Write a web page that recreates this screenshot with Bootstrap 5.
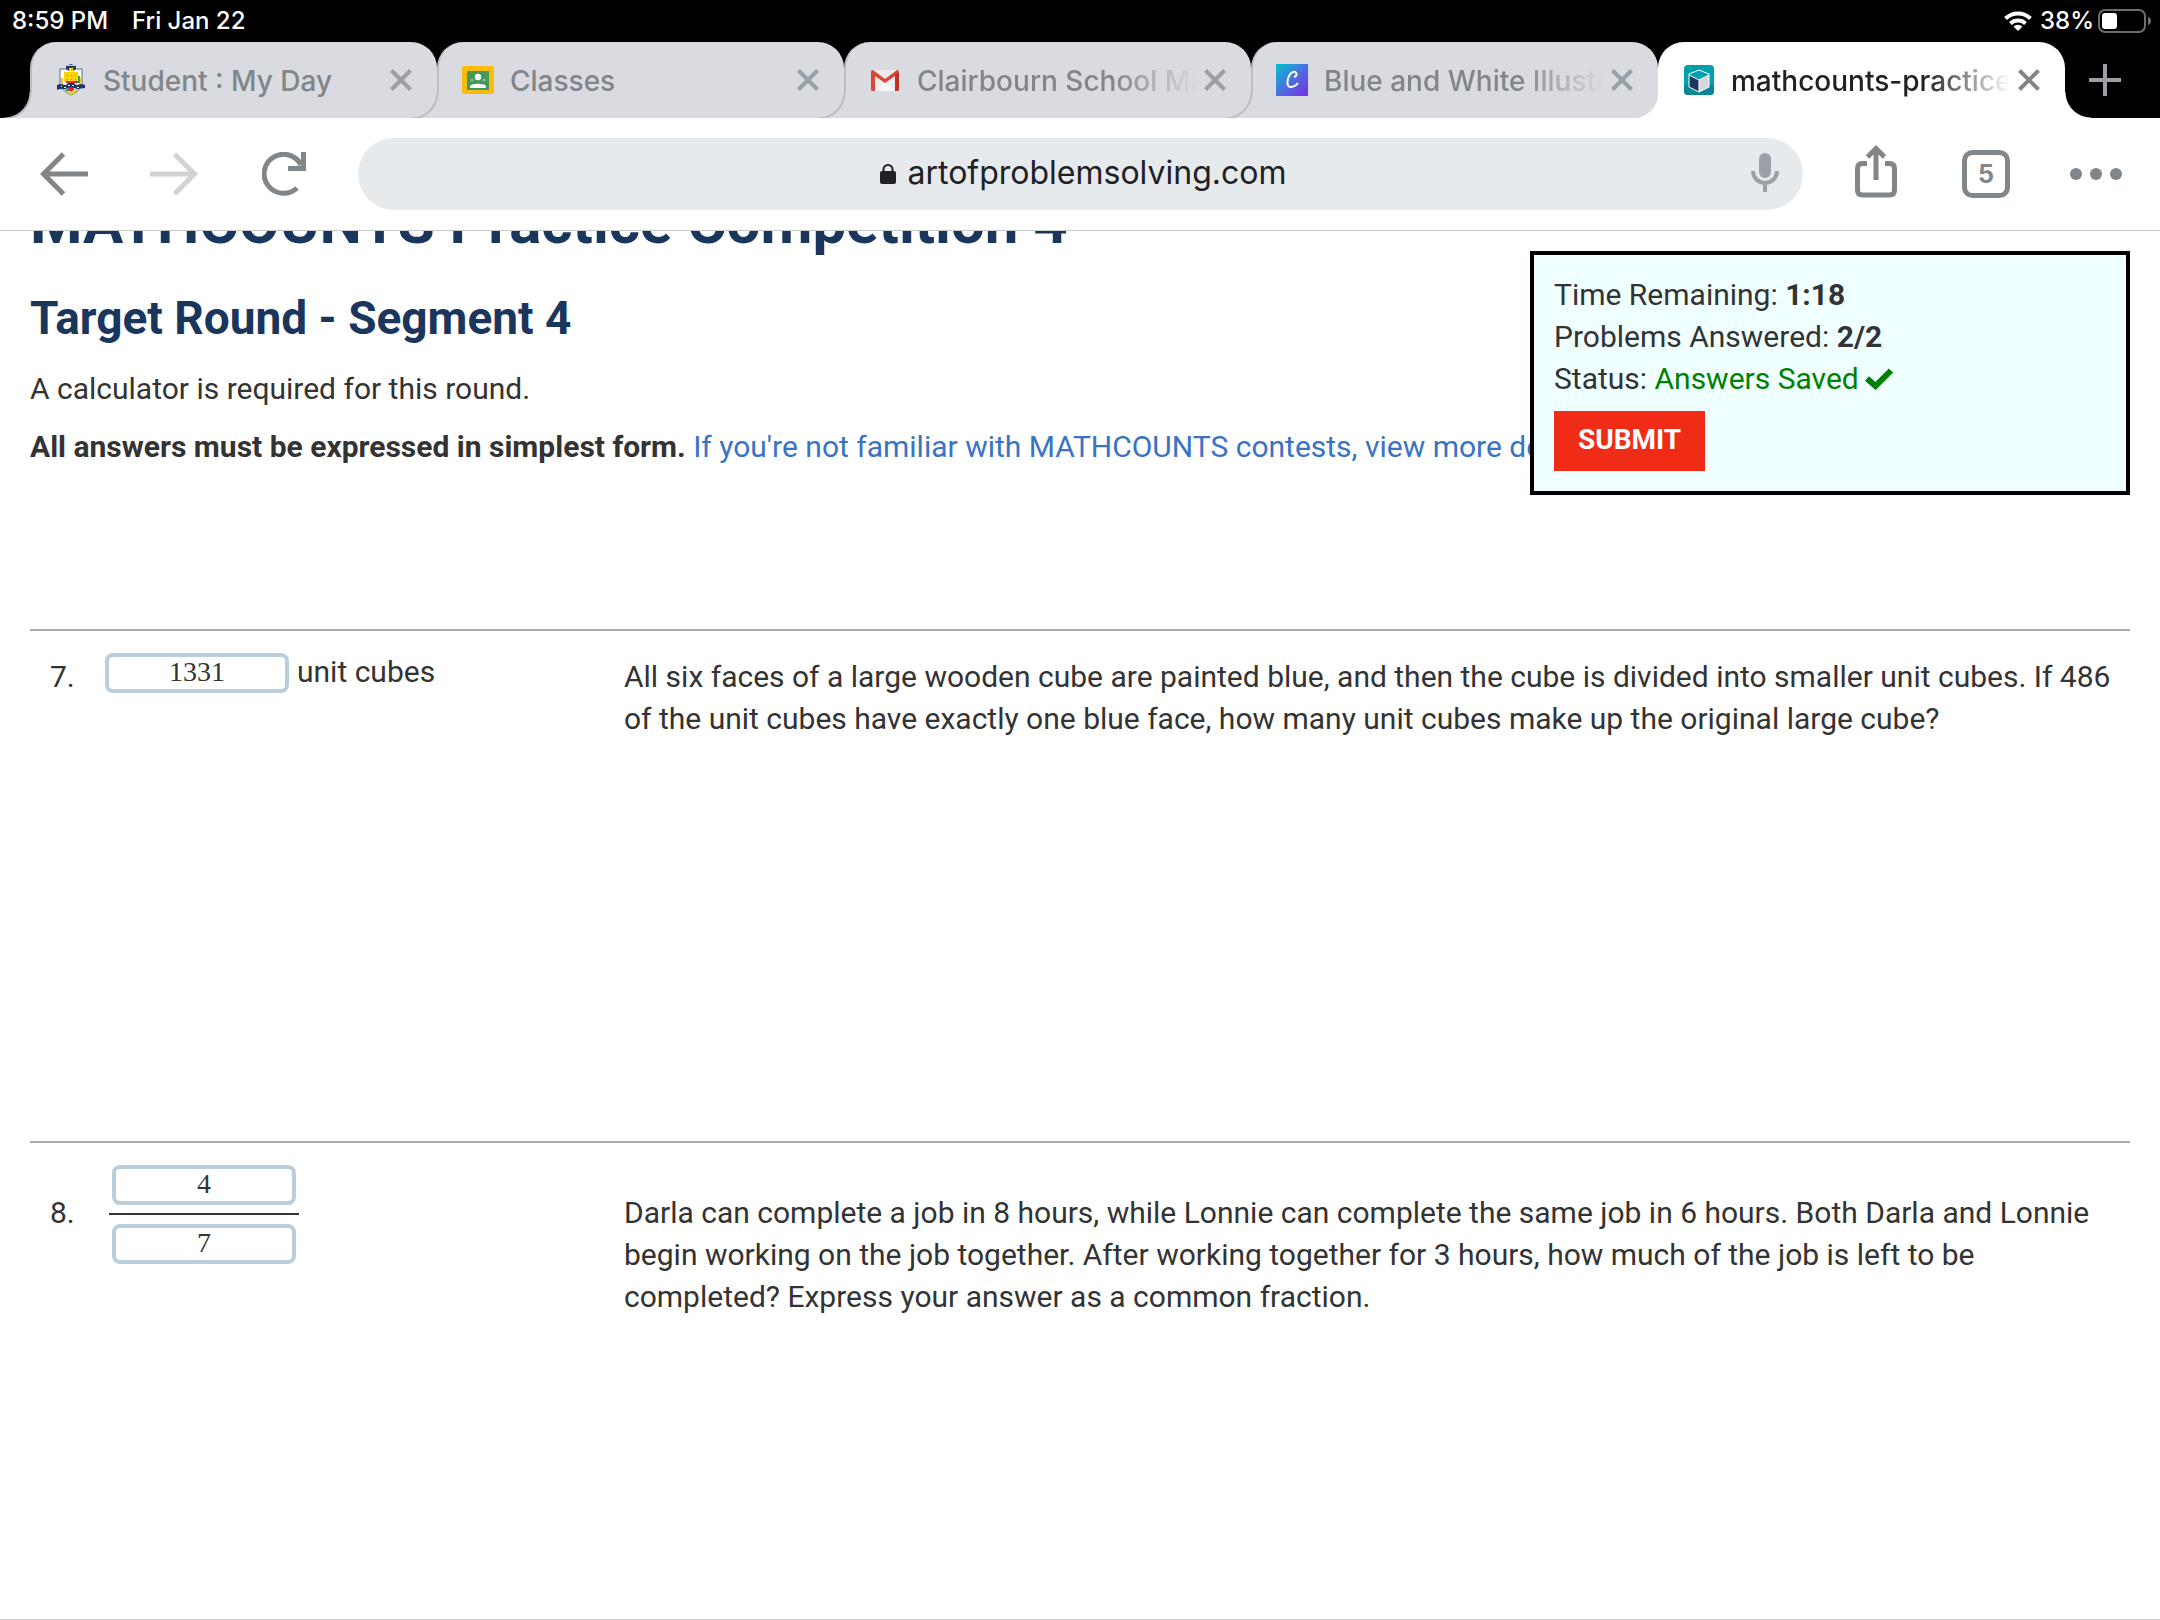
<!DOCTYPE html>
<html lang="en">
<head>
<meta charset="utf-8">
<meta name="viewport" content="width=device-width, initial-scale=1">
<title>MATHCOUNTS Practice Competition 4</title>
<link href="https://cdn.jsdelivr.net/npm/bootstrap@5.3.0/dist/css/bootstrap.min.css" rel="stylesheet">
<style>
  :root { --chrome-grey: #80868a; --tab-bg: #dadbe0; --tab-line: #bcbdc2; --navy: #1b365d; }
  body { font-family: Roboto, sans-serif; font-size: 30px; line-height: 42px; color: #333; }
  svg { display: block; }

  .status-bar { height: 42px; padding: 0 9px 0 12px; font: 500 24px/40px Inter, sans-serif; }
  .tab-strip { height: 76px; padding-left: 30px; font-family: Inter, sans-serif; }
  .browser-tab { position: relative; flex: 1 1 0; min-width: 0; padding: 0 25px 0 23px; background: var(--tab-bg); border-left: 2px solid var(--tab-line); border-radius: 26px 26px 0 0; color: var(--chrome-grey); }
  .browser-tab::before { content: ""; position: absolute; left: -28px; bottom: 0; width: 28px; height: 26px; background: radial-gradient(circle at 0 0, transparent 25px, var(--tab-line) 26px, var(--tab-line) 27px, var(--tab-bg) 28px); }
  .browser-tab.current { background: #fff; border-color: #fff; color: #202124; }
  .browser-tab.current::before { background: radial-gradient(circle at 0 0, transparent 26px, #fff 27px); }
  .browser-tab.current::after { content: ""; position: absolute; right: -26px; bottom: 0; width: 26px; height: 26px; background: radial-gradient(circle at 100% 0, transparent 25px, #fff 26px); }
  .favicon { width: 32px; }
  .tab-label { flex: 1 1 0; min-width: 0; padding-top: 2px; overflow: hidden; white-space: nowrap; font-size: 28px; font-weight: 500; line-height: 40px; color: inherit; text-decoration: none; }
  .fading { -webkit-mask-image: linear-gradient(90deg, #000 70%, transparent); mask-image: linear-gradient(90deg, #000 70%, transparent); }
  .browser-tab .tab-close, .tab-strip .new-tab { color: #9aa0a8; }
  .browser-tab.current .tab-close { color: var(--chrome-grey); }
  .new-tab { width: 95px; padding-right: 15px; }

  .toolbar { height: 112px; padding: 0 9px; }
  .toolbar .tool { width: 110px; height: 80px; color: var(--chrome-grey); }
  .address { height: 72px; margin: 0 18px 0 19px; padding-left: 8px; background: #e6eaed; border-radius: 36px; color: #202124; }
  .address input { width: 382px; margin-left: 12px; padding: 0 0 2px; font: 400 32px/40px Inter, sans-serif; color: inherit; outline: 0; }
  .address .mic { right: 24px; top: 15px; color: #9aa0a8; }

  .page { padding: 0 30px; border-top: 1px solid #c8c9ca; border-bottom: 1px solid #c8c9ca; }
  .contest-title { margin: -44px 0 32px; font-size: 60px; line-height: 72px; font-weight: 700; color: var(--navy); }
  .round-title { margin: 0 0 23px; font-size: 46px; line-height: 54px; font-weight: 700; color: var(--navy); }
  .notes { height: 261px; }
  .notes p { margin: 0 0 16px; }
  .notes a { color: #3a72c4; text-decoration: none; }
  .timer { right: 30px; top: 20px; width: 600px; padding: 19px 20px 20px; border: 4px solid #000; background: #f0ffff; }
  .saved { gap: 6px; color: #008000; }
  .timer .submit { height: 60px; margin-top: 11px; padding: 0 24px 2px; background: #f02b16; color: #fff; font-size: 28px; font-weight: 700; line-height: 58px; }

  .problem { border-top: 2px solid #a9a9a9; padding: 22px 0 0 20px; min-height: 512px; }
  .number { width: 55px; }
  .reply { width: 519px; line-height: 38px; }
  .number, .question { padding-top: 3px; }
  .with-fraction .number, .with-fraction .question { padding-top: 27px; }
  .answer { width: 184px; height: 40px; padding: 0 0 2px; border: 4px solid #b9cddd; border-radius: 8px; font: 28px/30px "Liberation Serif", serif; text-align: center; color: #333; }
  .fraction { width: 190px; margin-left: 4px; }
  .fraction-bar { height: 2px; margin: 8px 0 9px; background: #333; }
</style>
<script src="https://cdn.jsdelivr.net/npm/bootstrap@5.3.0/dist/js/bootstrap.bundle.min.js"></script>
</head>
<body class="vh-100 d-flex flex-column overflow-hidden bg-white">
<header>
  <div class="bg-black">
    <div class="status-bar d-flex align-items-center text-white">
      <span>8:59 PM</span><span class="ms-4">Fri Jan 22</span>
      <svg class="ms-auto" width="28" height="20" viewBox="0 0 28 20" fill="none" stroke="#fff" stroke-width="4"><path d="M1.500 7.500a18 18 0 0 1 25 0M6.500 12.500a11 11 0 0 1 15 0"/><path d="M14 20l-4.500-4.500a6.500 6.500 0 0 1 9 0z" fill="#fff" stroke="none"/></svg>
      <span class="ms-2">38%</span>
      <svg class="ms-1" width="53" height="24" viewBox="0 0 53 24"><rect x="1" y="1" width="46" height="22" rx="6" fill="none" stroke="#6d6d6d" stroke-width="2"/><rect x="4" y="4" width="15" height="16" rx="3" fill="#fff"/><path d="M50 8c4 1 4 7 0 8z" fill="#6d6d6d"/></svg>
    </div>
    <nav class="tab-strip d-flex" aria-label="Tabs">
      <div class="browser-tab d-flex align-items-center">
        <svg class="favicon" height="32" viewBox="-2 0 32 32"><path d="M3 5h22v15q-2 7-11 11Q5 27 3 20z" fill="#fff" stroke="#5b6b88"/><path d="M5 14v7q3 6 9 9 6-3 9-9v-7" fill="none" stroke="#e6c928" stroke-width="2"/><path d="M7 8h14v10H7z" fill="#fdd303"/><path d="M10 11h1v1h-1zm4 0h1v1h-1zm4 0h1v1h-1zm-8 4h1v1h-1zm4 0h1v1h-1zm4 0h1v1h-1z" fill="#a58a1a"/><path d="M9 2l5-2 5 2v3l-3 2h-4L9 5z" fill="#1f3768"/><path d="M10 1h8v1h-8zM12 4h4v3h-4z" fill="#fdd303"/><path d="M15 3h2v1h-2z" fill="#d8263c"/><path d="M9 17h12v2H9zm2 6h6v3l-3 2-3-2z" fill="#d8263c"/><path d="M21 12h2v7h-2zM9 25h3v2H9z" fill="#3f9a57"/><path d="M0 21l3-1 6 1 2-2h6l2 2 6-1 3 1v3l-8 1-3-1-3-1-5 2-6 0-3 1z" fill="#1f3768"/><path d="M4 22h1v1H4zm3 1h2v1H7zm4-2h2v1h-2zm4 0h2v1h-2zm5 2h2v1h-2z" fill="#fff"/></svg>
        <a class="tab-label ms-3" href="#">Student : My Day</a>
        <button class="tab-close btn p-0 border-0 ms-2" aria-label="Close tab"><svg width="22" height="22" viewBox="0 0 22 22" stroke="currentColor" stroke-width="4"><path d="M1.500 1.500l19 19m0-19l-19 19"/></svg></button>
      </div>
      <div class="browser-tab d-flex align-items-center">
        <svg class="favicon" height="28" viewBox="0 0 32 28"><rect width="32" height="28" rx="2" fill="#fbbc0c"/><path d="M5 5h22v19H5z" fill="#45975a"/><circle cx="16" cy="11" r="3.200" fill="#fff"/><path d="M8 22v-2c2-3 14-3 16 0v2z" fill="#fff"/><circle cx="10" cy="14" r="1.500" fill="#87bd94"/><circle cx="22" cy="14" r="1.500" fill="#87bd94"/></svg>
        <a class="tab-label ms-3" href="#">Classes</a>
        <button class="tab-close btn p-0 border-0 ms-2" aria-label="Close tab"><svg width="22" height="22" viewBox="0 0 22 22" stroke="currentColor" stroke-width="4"><path d="M1.500 1.500l19 19m0-19l-19 19"/></svg></button>
      </div>
      <div class="browser-tab d-flex align-items-center">
        <svg class="favicon" height="21" viewBox="-2 0 32 21"><path d="M1 0h26v21H1z" fill="#ececec"/><path d="M4 21l10-9 10 9z" fill="#f8f8f8"/><path d="M0 2q0-2 2-2l12 9 12-9q2 0 2 2l-4 4-10 7L4 6v15H1l-1-1z" fill="#dc4538"/><path d="M28 2v18l-1 1h-3V5z" fill="#be3125"/></svg>
        <a class="tab-label fading ms-3" href="#">Clairbourn School Mail</a>
        <button class="tab-close btn p-0 border-0 ms-2" aria-label="Close tab"><svg width="22" height="22" viewBox="0 0 22 22" stroke="currentColor" stroke-width="4"><path d="M1.500 1.500l19 19m0-19l-19 19"/></svg></button>
      </div>
      <div class="browser-tab d-flex align-items-center">
        <svg class="favicon" height="32" viewBox="0 0 32 32"><defs><linearGradient id="canva" x2="1" y2="1"><stop stop-color="#00c4cc"/><stop offset=".5" stop-color="#4a70df"/><stop offset="1" stop-color="#7d2ae7"/></linearGradient></defs><path d="M0 0h32v32H0z" fill="url(#canva)"/><path d="M18 13c4-1 3-6-1-5-5 2-8 14-3 15 4 0 6-1 8-4" fill="none" stroke="#fff" stroke-width="2"/></svg>
        <a class="tab-label fading ms-3" href="#">Blue and White Illustration</a>
        <button class="tab-close btn p-0 border-0 ms-2" aria-label="Close tab"><svg width="22" height="22" viewBox="0 0 22 22" stroke="currentColor" stroke-width="4"><path d="M1.500 1.500l19 19m0-19l-19 19"/></svg></button>
      </div>
      <div class="browser-tab current d-flex align-items-center">
        <svg class="favicon" height="30" viewBox="-1 0 32 30"><rect width="30" height="30" rx="4" fill="#009fae"/><path d="M0 21q4-3 8 0h14q4-3 8 0v5q0 4-4 4H4q-4 0-4-4z" fill="#078694"/><path d="M5 10l10 5v12L5 22z" fill="#1b365d"/><path d="M25 10l-10 5v12l10-5z" fill="#d4d6da"/><path d="M15 5l10 4v13l-10 5-10-5V9zM5 10l10 5 10-5M15 15v12" fill="none" stroke="#fff"/></svg>
        <a class="tab-label fading ms-3" href="#" aria-current="page">mathcounts-practice</a>
        <button class="tab-close btn p-0 border-0 ms-2" aria-label="Close tab"><svg width="22" height="22" viewBox="0 0 22 22" stroke="currentColor" stroke-width="4"><path d="M1.500 1.500l19 19m0-19l-19 19"/></svg></button>
      </div>
      <button class="new-tab btn border-0 rounded-0 py-0 ps-0 d-flex align-items-center justify-content-center" aria-label="New tab"><svg width="32" height="32" viewBox="0 0 32 32" stroke="currentColor" stroke-width="4"><path d="M0 16h32M16 0v32"/></svg></button>
    </nav>
  </div>
  <div class="toolbar d-flex align-items-center bg-white">
    <button class="tool btn border-0 p-0 d-flex align-items-center justify-content-center" aria-label="Back"><svg width="48" height="44" viewBox="0 0 48 44" fill="none" stroke="currentColor" stroke-width="5"><path d="M48 22H4M23.500 2l-20 20 20 20"/></svg></button>
    <button class="tool btn border-0 p-0 d-flex align-items-center justify-content-center" aria-label="Forward"><svg width="48" height="44" viewBox="0 0 48 44" fill="none" stroke="#d3d3d4" stroke-width="5"><path d="M0 22h44M24.500 2l20 20-20 20"/></svg></button>
    <button class="tool btn border-0 p-0 d-flex align-items-center justify-content-center" aria-label="Reload"><svg width="44" height="44" viewBox="0 0 44 44" fill="none" stroke="currentColor" stroke-width="5"><path d="M35 36A19.500 19.500 0 1 1 39 13M41.500 0v16.500H26"/></svg></button>
    <form class="address position-relative flex-grow-1 d-flex align-items-center justify-content-center" onsubmit="return false">
      <svg width="16" height="20" viewBox="0 0 16 20"><rect y="7" width="16" height="13" rx="2" fill="currentColor"/><path d="M3.500 9V5.500a4.500 4.500 0 0 1 9 0V9" fill="none" stroke="currentColor" stroke-width="2"/></svg>
      <input class="border-0 bg-transparent" type="text" aria-label="Address" value="artofproblemsolving.com">
      <button class="mic btn border-0 p-0 position-absolute" type="button" aria-label="Voice search"><svg width="28" height="40" viewBox="0 0 28 40"><rect x="8" width="12" height="25" rx="6" fill="currentColor"/><path d="M2 18a12 12 0 0 0 24 0M14 30v9" fill="none" stroke="currentColor" stroke-width="4"/></svg></button>
    </form>
    <button class="tool btn border-0 p-0 d-flex align-items-center justify-content-center" aria-label="Share"><svg width="42" height="60" viewBox="0 0 42 60" fill="none" stroke="currentColor" stroke-width="5"><path d="M12 19.500H7.500q-5 0-5 5V46q0 5 5 5h27q5 0 5-5V24.500q0-5-5-5H30M21 36V4M12.500 13L21 4.500l8.500 8.500"/></svg></button>
    <button class="tool btn border-0 p-0 d-flex align-items-center justify-content-center" aria-label="5 open tabs"><svg width="48" height="48" viewBox="0 0 48 48"><rect x="2.500" y="2.500" width="43" height="43" rx="8" fill="none" stroke="currentColor" stroke-width="5"/><text x="24" y="33" text-anchor="middle" font-family="Inter, sans-serif" font-size="25" font-weight="700" fill="currentColor">5</text></svg></button>
    <button class="tool btn border-0 p-0 d-flex align-items-center justify-content-center" aria-label="More"><svg width="52" height="12" viewBox="0 0 52 12" fill="currentColor"><circle cx="6" cy="6" r="6"/><circle cx="26" cy="6" r="6"/><circle cx="46" cy="6" r="6"/></svg></button>
  </div>
</header>
<main class="page position-relative flex-grow-1 overflow-hidden">
  <h1 class="contest-title">MATHCOUNTS Practice Competition 4</h1>
  <h2 class="round-title">Target Round - Segment 4</h2>
  <div class="notes text-nowrap">
    <p>A calculator is required for this round.</p>
    <p><strong>All answers must be expressed in simplest form.</strong> <a href="#">If you're not familiar with MATHCOUNTS contests, view more details.</a></p>
  </div>
  <aside class="timer position-absolute">
    <div>Time Remaining: <strong>1:18</strong></div>
    <div>Problems Answered: <strong>2/2</strong></div>
    <div class="d-flex align-items-center">Status:&nbsp;<span class="saved d-flex align-items-center">Answers Saved<svg width="28" height="22" viewBox="0 0 28 22" fill="none" stroke="currentColor" stroke-width="6"><path d="M2 10.500l8.500 7.500L26 2.500"/></svg></span></div>
    <button class="submit btn border-0 rounded-0 d-block">SUBMIT</button>
  </aside>
  <section class="problem d-flex align-items-start">
    <div class="number flex-shrink-0">7.</div>
    <div class="reply flex-shrink-0 d-flex align-items-start"><input class="answer" id="a7" type="text" value="1331"><label class="ms-2" for="a7">unit cubes</label></div>
    <div class="question">All six faces of a large wooden cube are painted blue, and then the cube is divided into smaller unit cubes. If 486 of the unit cubes have exactly one blue face, how many unit cubes make up the original large cube?</div>
  </section>
  <section class="problem with-fraction d-flex align-items-start">
    <div class="number flex-shrink-0">8.</div>
    <div class="reply flex-shrink-0">
      <div class="fraction d-flex flex-column">
        <input class="answer align-self-center" type="text" aria-label="Numerator" value="4">
        <div class="fraction-bar"></div>
        <input class="answer align-self-center" type="text" aria-label="Denominator" value="7">
      </div>
    </div>
    <div class="question">Darla can complete a job in 8 hours, while Lonnie can complete the same job in 6 hours. Both Darla and Lonnie begin working on the job together. After working together for 3 hours, how much of the job is left to be completed? Express your answer as a common fraction.</div>
  </section>
</main>
</body>
</html>
